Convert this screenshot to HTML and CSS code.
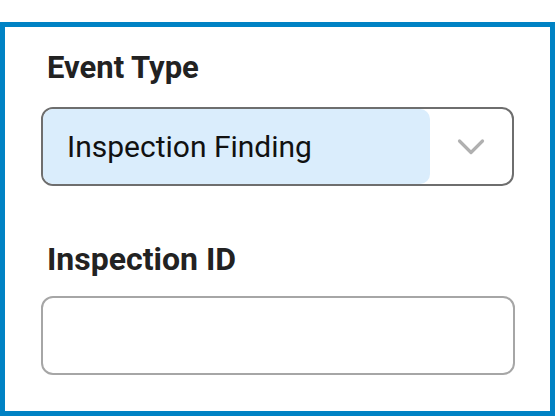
FILE: index.html
```html
<!DOCTYPE html>
<html>
<head>
<meta charset="utf-8">
<link rel="stylesheet" href="styles.css">
</head>
<body>
<div class="panel">
  <div class="field">
    <label class="label label-first">Event Type</label>
    <div class="select">
      <div class="select-value">Inspection Finding</div>
      <div class="select-arrow">
        <svg width="28" height="18" viewBox="0 0 28 18"><path d="M2.5 3 L14 14.5 L25.5 3" fill="none" stroke="#b0b0b0" stroke-width="3.2" stroke-linecap="round" stroke-linejoin="round"/></svg>
      </div>
    </div>
  </div>
  <div class="field">
    <label class="label label-second">Inspection ID</label>
    <div class="input"></div>
  </div>
</div>
</body>
</html>
```

FILE: styles.css
```css
html, body {
  margin: 0;
  padding: 0;
  background: #ffffff;
}
body {
  padding-top: 22px;
  font-family: Roboto, "Liberation Sans", Arial, sans-serif;
}
.panel {
  box-sizing: border-box;
  height: 394px;
  border: 5px solid #0082c4;
  padding: 23px 36px 36px 36px;
  display: flex;
  flex-direction: column;
}
.field {
  display: flex;
  flex-direction: column;
}
.label {
  display: block;
  font-weight: 700;
  color: #222222;
  padding-left: 6px;
  line-height: 36px;
}
.label-first {
  font-size: 31px;
  margin-bottom: 21px;
}
.label-second {
  font-size: 32px;
  margin-top: 55px;
  margin-bottom: 19px;
}
.select {
  box-sizing: border-box;
  height: 79px;
  border: 2px solid #6e6e6e;
  border-radius: 12px;
  display: flex;
  align-items: stretch;
}
.select-value {
  box-sizing: border-box;
  width: 387px;
  background: #daedfc;
  border-radius: 10px;
  padding-left: 24px;
  display: flex;
  align-items: center;
  font-size: 30px;
  color: #111111;
}
.select-arrow {
  flex: 1;
  display: flex;
  align-items: center;
  justify-content: center;
}
.select-arrow svg {
  display: block;
}
.input {
  box-sizing: border-box;
  height: 79px;
  margin-right: -1px;
  border: 2px solid #a6a6a6;
  border-radius: 12px;
  background: #ffffff;
}
```
